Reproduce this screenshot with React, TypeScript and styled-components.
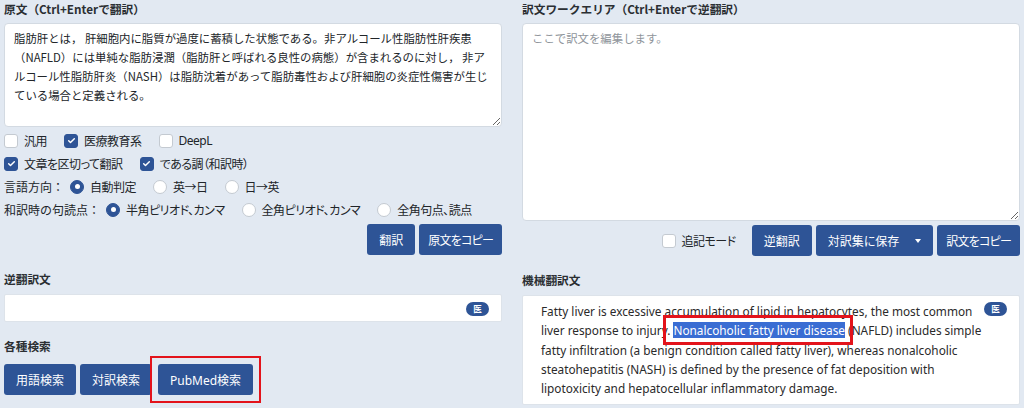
import React from "react";
import styled, { createGlobalStyle } from "styled-components";

const BLUE = "#2e5496";

const GlobalStyle = createGlobalStyle`
  html, body {
    margin: 0;
    padding: 0;
    background: #e2e9f2;
  }
  body {
    width: 1024px;
    height: 408px;
    overflow: hidden;
    font-family: "Noto Sans", "Noto Sans CJK JP", sans-serif;
    font-size: 12px;
    color: #212529;
  }
`;

const Page = styled.div`
  display: grid;
  grid-template-columns: 498px 498px;
  column-gap: 20px;
  padding: 0 4px;
`;

const Column = styled.div`
  display: flex;
  flex-direction: column;
`;

const SectionTitle = styled.div<{ $top?: number; $bottom?: number }>`
  font-family: "Noto Sans CJK JP", sans-serif;
  font-weight: 700;
  font-size: 11.7px;
  line-height: 18px;
  height: 18px;
  margin-top: ${({ $top }) => $top ?? 0}px;
  margin-bottom: ${({ $bottom }) => $bottom ?? 5}px;
  color: #2b2f33;
`;

const TextArea = styled.textarea<{ $height: number }>`
  box-sizing: border-box;
  width: 100%;
  height: ${({ $height }) => $height}px;
  margin: 0;
  padding: 5px 8px 5px 9px;
  border: 1px solid #d3dae2;
  border-radius: 4px;
  background: #fff;
  font-family: "Noto Sans CJK JP", sans-serif;
  font-size: 11.4px;
  line-height: 19px;
  color: #212529;
  resize: vertical;
  display: block;

  &::placeholder {
    color: #8f959b;
  }
`;

const Options = styled.div`
  display: flex;
  flex-direction: column;
  margin-top: 2px;
`;

const OptionRow = styled.div`
  display: flex;
  align-items: center;
  height: 23px;
  gap: 17px;
`;

const RowLabel = styled.span`
  font-family: "Noto Sans CJK JP", sans-serif;
  white-space: nowrap;
  flex-shrink: 0;
  margin-right: -11px;
`;

const Choice = styled.label`
  display: inline-flex;
  align-items: center;
  gap: 6px;
  font-family: "Noto Sans", "Noto Sans CJK JP", sans-serif;
  font-feature-settings: "palt";
  letter-spacing: -0.5px;
  color: #212529;
  white-space: nowrap;
  flex-shrink: 0;
`;

const CheckBox = styled.span<{ $on?: boolean }>`
  box-sizing: border-box;
  width: 14px;
  height: 14px;
  border-radius: 3px;
  border: 1px solid ${({ $on }) => ($on ? BLUE : "#c4cad1")};
  background: ${({ $on }) => ($on ? BLUE : "#fff")};
  display: inline-flex;
  align-items: center;
  justify-content: center;
`;

const Radio = styled.span<{ $on?: boolean }>`
  box-sizing: border-box;
  width: 14px;
  height: 14px;
  border-radius: 50%;
  border: 1px solid ${({ $on }) => ($on ? BLUE : "#c4cad1")};
  background: ${({ $on }) => ($on ? BLUE : "#fff")};
  display: inline-flex;
  align-items: center;
  justify-content: center;

  &::after {
    content: "";
    width: 5px;
    height: 5px;
    border-radius: 50%;
    background: #fff;
    display: ${({ $on }) => ($on ? "block" : "none")};
  }
`;

const ButtonRow = styled.div<{ $align?: string; $top: number }>`
  display: flex;
  align-items: center;
  justify-content: ${({ $align }) => $align ?? "flex-end"};
  gap: 4px;
  margin-top: ${({ $top }) => $top}px;
`;

const Button = styled.button<{ $lead?: number; $tight?: boolean }>`
  height: 31px;
  padding: 0 ${({ $tight }) => ($tight ? 9 : 12)}px;
  margin-left: ${({ $lead }) => $lead ?? 0}px;
  border: none;
  border-radius: 3px;
  background: ${BLUE};
  color: #fff;
  font-family: "Noto Sans", "Noto Sans CJK JP", sans-serif;
  font-feature-settings: "palt";
  font-size: 12px;
  letter-spacing: ${({ $tight }) => ($tight ? "-0.8px" : "0")};
  display: inline-flex;
  align-items: center;
  cursor: pointer;
  white-space: nowrap;
`;

const Caret = styled.span`
  width: 0;
  height: 0;
  margin-left: 16px;
  border-left: 3.5px solid transparent;
  border-right: 3.5px solid transparent;
  border-top: 4px solid #fff;
`;

const Marked = styled.span<{ $pad: number }>`
  position: relative;
  display: inline-flex;
  margin-left: ${({ $pad }) => $pad}px;

  &::after {
    content: "";
    position: absolute;
    top: -8px;
    bottom: -8px;
    left: -8px;
    right: -8px;
    border: 2.5px solid #e3131b;
    pointer-events: none;
  }
`;

const OutputBox = styled.div<{ $height?: number }>`
  position: relative;
  box-sizing: border-box;
  background: #fff;
  border: 1px solid #dde3ea;
  border-radius: 2px;
  height: ${({ $height }) => ($height ? `${$height}px` : "auto")};
  padding: 6px 34px 6px 18px;
  font-family: "Noto Sans", sans-serif;
  font-size: 11.8px;
  line-height: 19.3px;
  color: #2a2a2a;
`;

const Badge = styled.span<{ $top: number }>`
  position: absolute;
  top: ${({ $top }) => $top}px;
  right: 12px;
  width: 23px;
  height: 14px;
  border-radius: 7px;
  background: ${BLUE};
  color: #fff;
  font-family: "Noto Sans CJK JP", sans-serif;
  font-size: 8.5px;
  font-weight: 700;
  display: flex;
  align-items: center;
  justify-content: center;
`;

const Selected = styled.span`
  position: relative;
  background: #3a6dd3;
  color: #fff;

  &::after {
    content: "";
    position: absolute;
    top: -7px;
    bottom: -7px;
    left: -10px;
    right: -8px;
    border: 3px solid #e3131b;
  }
`;

const Check = () => (
  <svg width="9" height="9" viewBox="0 0 16 16">
    <path
      d="M3 8.5l3.2 3.2L13 4.8"
      fill="none"
      stroke="#fff"
      strokeWidth="2.6"
      strokeLinecap="round"
      strokeLinejoin="round"
    />
  </svg>
);

const CheckChoice = ({ on, label }: { on?: boolean; label: string }) => (
  <Choice>
    <CheckBox $on={on}>{on && <Check />}</CheckBox>
    {label}
  </Choice>
);

const RadioChoice = ({ on, label }: { on?: boolean; label: string }) => (
  <Choice>
    <Radio $on={on} />
    {label}
  </Choice>
);

const sourceText =
  "脂肪肝とは， 肝細胞内に脂質が過度に蓄積した状態である。非アルコール性脂肪性肝疾患（NAFLD）には単純な脂肪浸潤（脂肪肝と呼ばれる良性の病態）が含まれるのに対し， 非アルコール性脂肪肝炎（NASH）は脂肪沈着があって脂肪毒性および肝細胞の炎症性傷害が生じている場合と定義される。";

export default function App() {
  return (
    <>
      <GlobalStyle />
      <Page>
        <Column>
          <SectionTitle>原文（Ctrl+Enterで翻訳）</SectionTitle>
          <TextArea $height={104} defaultValue={sourceText} />
          <Options>
            <OptionRow>
              <CheckChoice label="汎用" />
              <CheckChoice on label="医療教育系" />
              <CheckChoice label="DeepL" />
            </OptionRow>
            <OptionRow>
              <CheckChoice on label="文章を区切って翻訳" />
              <CheckChoice on label="である調（和訳時）" />
            </OptionRow>
            <OptionRow>
              <RowLabel>言語方向：</RowLabel>
              <RadioChoice on label="自動判定" />
              <RadioChoice label="英→日" />
              <RadioChoice label="日→英" />
            </OptionRow>
            <OptionRow>
              <RowLabel>和訳時の句読点：</RowLabel>
              <RadioChoice on label="半角ピリオド、カンマ" />
              <RadioChoice label="全角ピリオド、カンマ" />
              <RadioChoice label="全角句点、読点" />
            </OptionRow>
          </Options>
          <ButtonRow $top={3}>
            <Button>翻訳</Button>
            <Button $tight>原文をコピー</Button>
          </ButtonRow>

          <SectionTitle $top={15} $bottom={6}>逆翻訳文</SectionTitle>
          <OutputBox $height={28}>
            <Badge $top={7}>医</Badge>
          </OutputBox>

          <SectionTitle $top={15}>各種検索</SectionTitle>
          <ButtonRow $align="flex-start" $top={4}>
            <Button>用語検索</Button>
            <Button>対訳検索</Button>
            <Marked $pad={2}>
              <Button>PubMed検索</Button>
            </Marked>
          </ButtonRow>
        </Column>

        <Column>
          <SectionTitle>訳文ワークエリア（Ctrl+Enterで逆翻訳）</SectionTitle>
          <TextArea $height={198} placeholder="ここで訳文を編集します。" />
          <ButtonRow $top={4}>
            <CheckChoice label="追記モード" />
            <Button $lead={12}>逆翻訳</Button>
            <Button>
              対訳集に保存
              <Caret />
            </Button>
            <Button $tight>訳文をコピー</Button>
          </ButtonRow>

          <SectionTitle $top={15} $bottom={6}>機械翻訳文</SectionTitle>
          <OutputBox>
            <Badge $top={6}>医</Badge>
            Fatty liver is excessive accumulation of lipid in hepatocytes, the most common liver
            response to injury. <Selected>Nonalcoholic fatty liver disease</Selected> (NAFLD)
            includes simple fatty infiltration (a benign condition called fatty liver), whereas
            nonalcoholic steatohepatitis (NASH) is defined by the presence of fat deposition with
            lipotoxicity and hepatocellular inflammatory damage.
          </OutputBox>
        </Column>
      </Page>
    </>
  );
}
